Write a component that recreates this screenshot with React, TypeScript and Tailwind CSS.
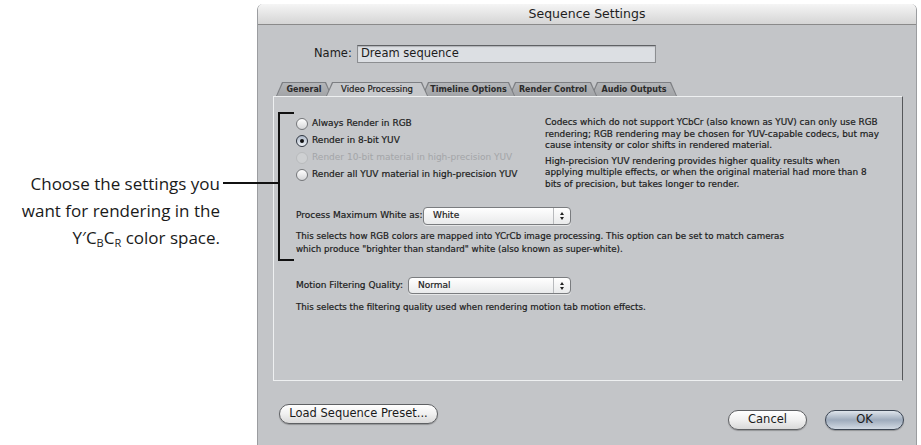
// Sequence Settings dialog (Video Processing tab) with the manual's callout on the left.
const ui = "font-['DejaVu_Sans','Liberation_Sans',sans-serif]";
const ink = "[-webkit-text-stroke:0.2px_#1c1c1c]";

function Radio({ label, checked = false, disabled = false }: { label: string; checked?: boolean; disabled?: boolean }) {
  const ring = disabled
    ? "border-[#b9bbbd] bg-[#ced0d2]"
    : checked
      ? "border-[#2e3540] bg-gradient-to-b from-[#aeb9c8] to-[#eef1f5]"
      : "border-[#75777a] bg-gradient-to-b from-[#ffffff] to-[#d5d6d8]";
  return (
    <div className="flex h-[17px] items-center gap-[4px]">
      <span className={`flex h-[12px] w-[12px] shrink-0 items-center justify-center rounded-full border ${ring}`}>
        {checked && <span className="h-[4px] w-[4px] rounded-full bg-[#101010]" />}
      </span>
      <span className={`text-[9px] ${disabled ? "text-[#a3a5a8]" : `text-[#1c1c1c] ${ink}`}`}>{label}</span>
    </div>
  );
}

function Popup({ value, w, h }: { value: string; w: string; h: string }) {
  return (
    <div className={`flex ${w} ${h} items-center rounded-[4px] border border-[#7a7c7f] bg-gradient-to-b from-[#ffffff] to-[#e9eaeb] shadow-[0_1px_0_#e6e7e8]`}>
      <span className={`flex-1 pl-[9px] text-[9px] text-[#1c1c1c] ${ink}`}>{value}</span>
      <span className="flex h-full w-[17px] flex-col items-center justify-center gap-[2px] border-l border-[#b8babd]">
        <span className="h-0 w-0 border-x-[2.5px] border-b-[3px] border-x-transparent border-b-[#222]" />
        <span className="h-0 w-0 border-x-[2.5px] border-t-[3px] border-x-transparent border-t-[#222]" />
      </span>
    </div>
  );
}

const tabs = [
  { label: "General", w: "w-[56px]", z: "z-[4]" },
  { label: "Video Processing", w: "w-[102px]", z: "z-[6]", active: true },
  { label: "Timeline Options", w: "w-[93px]", z: "z-[3]" },
  { label: "Render Control", w: "w-[88px]", z: "z-[2]" },
  { label: "Audio Outputs", w: "w-[86px]", z: "z-[1]" },
];

function Tab({ label, w, z, active }: { label: string; w: string; z: string; active?: boolean }) {
  return (
    <div className={`relative -mr-[6px] h-[14px] ${w} ${z} bg-[#7d7f83] [clip-path:polygon(0_100%,6px_0,calc(100%-6px)_0,100%_100%)]`}>
      <div
        className={`absolute inset-x-[1px] top-[1px] bottom-0 flex items-center justify-center [clip-path:polygon(0_100%,6px_0,calc(100%-6px)_0,100%_100%)] ${
          active ? `bg-[#c6c8cb] text-[8.5px] text-[#1c1c1c] ${ink}` : "bg-gradient-to-b from-[#b3b5b8] to-[#a2a4a7] text-[8px] font-bold text-[#2a2a2a]"
        }`}
      >
        {label}
      </div>
    </div>
  );
}

function Button({ children, w, primary }: { children: string; w: string; primary?: boolean }) {
  return (
    <button
      type="button"
      className={`flex h-[20px] ${w} items-center justify-center rounded-full border text-[11.5px] text-[#1a1a1a] ${
        primary
          ? "border-[#3b4553] bg-gradient-to-b from-[#dfe5ec] via-[#9eabbc] to-[#d2dae4]"
          : "border-[#5e6063] bg-gradient-to-b from-[#ffffff] via-[#f0f0f0] to-[#d9d9d9]"
      } shadow-[0_1px_1px_rgba(0,0,0,0.25)]`}
    >
      {children}
    </button>
  );
}

export default function App() {
  return (
    <div className="relative flex h-[445px] w-[921px] overflow-hidden bg-white">
      {/* Callout text */}
      <div className="w-[257px] shrink-0 pr-[37px] pt-[170px] text-right font-['Open_Sans',sans-serif] text-[17px] leading-[27px] text-[#1a1a1a]">
        <p>Choose the settings you</p>
        <p>want for rendering in the</p>
        <p>
          Y′C<sub className="text-[11px]">B</sub>C<sub className="text-[11px]">R</sub> color space.
        </p>
      </div>

      {/* Dialog window */}
      <div className={`mt-[4px] flex h-[441px] w-[660px] shrink-0 flex-col overflow-hidden rounded-t-[6px] border-x border-[#9b9da0] ${ui}`}>
        <div className="flex h-[21px] shrink-0 items-center justify-center border-b border-[#8a8a8a] bg-gradient-to-b from-[#f5f5f5] to-[#d5d5d5] text-[12.5px] text-[#1e1e1e]">
          Sequence Settings
        </div>

        <div className="flex flex-1 flex-col bg-[#c3c5c8]">
          <div className="mt-[20px] flex items-center pl-[56px]">
            <span className="w-[43px] text-[11.5px] text-[#1c1c1c]">Name:</span>
            <div className="flex h-[18px] w-[299px] items-center border border-[#8c8e91] border-t-[#5f6164] bg-[#dcdfe3] pl-[3px] text-[11.5px] text-[#1c1c1c] shadow-[inset_0_1px_1px_rgba(0,0,0,0.2)]">
              Dream sequence
            </div>
          </div>

          <div className="mt-[19px] flex pl-[18px]">
            {tabs.map((t) => (
              <Tab key={t.label} {...t} />
            ))}
          </div>

          {/* Tab panel */}
          <div className="ml-[15px] flex h-[285px] w-[630px] flex-col border border-[#eef0f1] border-r-[#55575a] bg-[#c5c7ca] pl-[22px] text-[#1c1c1c]">
            <div className="flex h-[93px]">
              <div className="w-[249px] pt-[18px]">
                <Radio label="Always Render in RGB" />
                <Radio label="Render in 8-bit YUV" checked />
                <Radio label="Render 10-bit material in high-precision YUV" disabled />
                <Radio label="Render all YUV material in high-precision YUV" />
              </div>
              <div className={`whitespace-nowrap pt-[20px] text-[8.9px] leading-[11.5px] ${ink}`}>
                <p>
                  Codecs which do not support YCbCr (also known as YUV) can only use RGB
                  <br />
                  rendering; RGB rendering may be chosen for YUV-capable codecs, but may
                  <br />
                  cause intensity or color shifts in rendered material.
                </p>
                <p className="mt-[4px]">
                  High-precision YUV rendering provides higher quality results when
                  <br />
                  applying multiple effects, or when the original material had more than 8
                  <br />
                  bits of precision, but takes longer to render.
                </p>
              </div>
            </div>

            <div className="mt-[17px] flex items-center">
              <span className={`w-[127px] shrink-0 text-[9px] ${ink}`}>Process Maximum White as:</span>
              <Popup value="White" w="w-[148px]" h="h-[18px]" />
            </div>
            <p className={`mt-[5px] whitespace-nowrap text-[8.7px] leading-[13px] ${ink}`}>
              This selects how RGB colors are mapped into YCrCb image processing. This option can be set to match cameras
              <br />
              which produce "brighter than standard" white (also known as super-white).
            </p>

            <div className="mt-[21px] flex items-center">
              <span className={`w-[112px] shrink-0 text-[9px] ${ink}`}>Motion Filtering Quality:</span>
              <Popup value="Normal" w="w-[163px]" h="h-[17px]" />
            </div>
            <p className={`mt-[7px] text-[8.7px] leading-[13px] ${ink}`}>
              This selects the filtering quality used when rendering motion tab motion effects.
            </p>
          </div>

          <div className="mt-[23px] flex items-start pl-[21px] pr-[12px]">
            <Button w="w-[159px]">Load Sequence Preset...</Button>
            <div className="ml-auto mt-[6px] flex gap-[18px]">
              <Button w="w-[79px]">Cancel</Button>
              <Button w="w-[79px]" primary>
                OK
              </Button>
            </div>
          </div>
        </div>
      </div>

      {/* Callout leader and bracket, drawn over the dialog */}
      <div className="absolute left-[223px] top-[182px] h-[2px] w-[57px] bg-[#111]" />
      <div className="absolute left-[278px] top-[112px] h-[149px] w-[2px] bg-[#111]" />
      <div className="absolute left-[278px] top-[112px] h-[2px] w-[16px] bg-[#111]" />
      <div className="absolute left-[278px] top-[259px] h-[2px] w-[16px] bg-[#111]" />
    </div>
  );
}
